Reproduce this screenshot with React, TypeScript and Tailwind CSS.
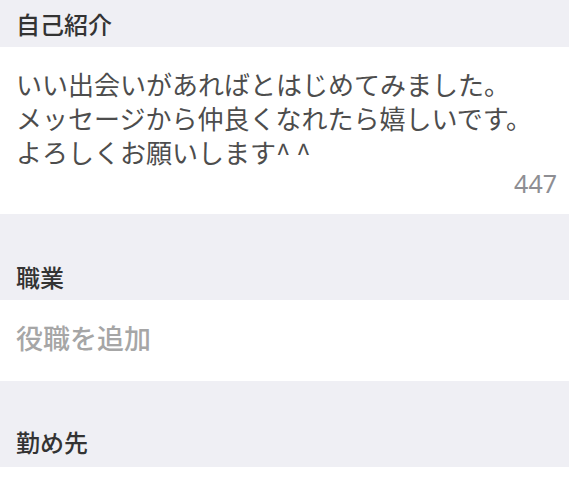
import React from "react";

const font = { fontFamily: '"Noto Sans CJK JP", "Noto Sans", sans-serif' };

export default function App() {
  return (
    <div className="w-[569px] h-[483px] overflow-hidden bg-white" style={font}>
      <div className="h-[47px] bg-[#efeff4] flex items-center px-[16px]">
        <span className="text-[24px] font-medium text-[#333333] leading-none">自己紹介</span>
      </div>
      <div className="h-[167px] bg-white pl-[16px] pr-[12px] pt-[20px] flex flex-col">
        <p className="text-[26px] leading-[34px] text-[#4d4d4d]">
          いい出会いがあればとはじめてみました。
          <br />
          メッセージから仲良くなれたら嬉しいです。
          <br />
          よろしくお願いします^ ^
        </p>
        <div
          className="text-right text-[25px] leading-[28px] text-[#8e8e93]"
          style={{ fontFamily: '"Noto Sans", sans-serif' }}
        >
          447
        </div>
      </div>
      <div className="h-[86px] bg-[#efeff4] flex items-end px-[16px] pb-[11px]">
        <span className="text-[24px] font-medium text-[#333333] leading-none">職業</span>
      </div>
      <div className="h-[81px] bg-white flex items-center px-[16px] pb-[6px]">
        <span className="text-[27px] font-medium text-[#a6a6a6] leading-none">役職を追加</span>
      </div>
      <div className="h-[86px] bg-[#efeff4] flex items-end px-[16px] pb-[13px]">
        <span className="text-[24px] font-medium text-[#333333] leading-none">勤め先</span>
      </div>
      <div className="h-[16px] bg-white" />
    </div>
  );
}
